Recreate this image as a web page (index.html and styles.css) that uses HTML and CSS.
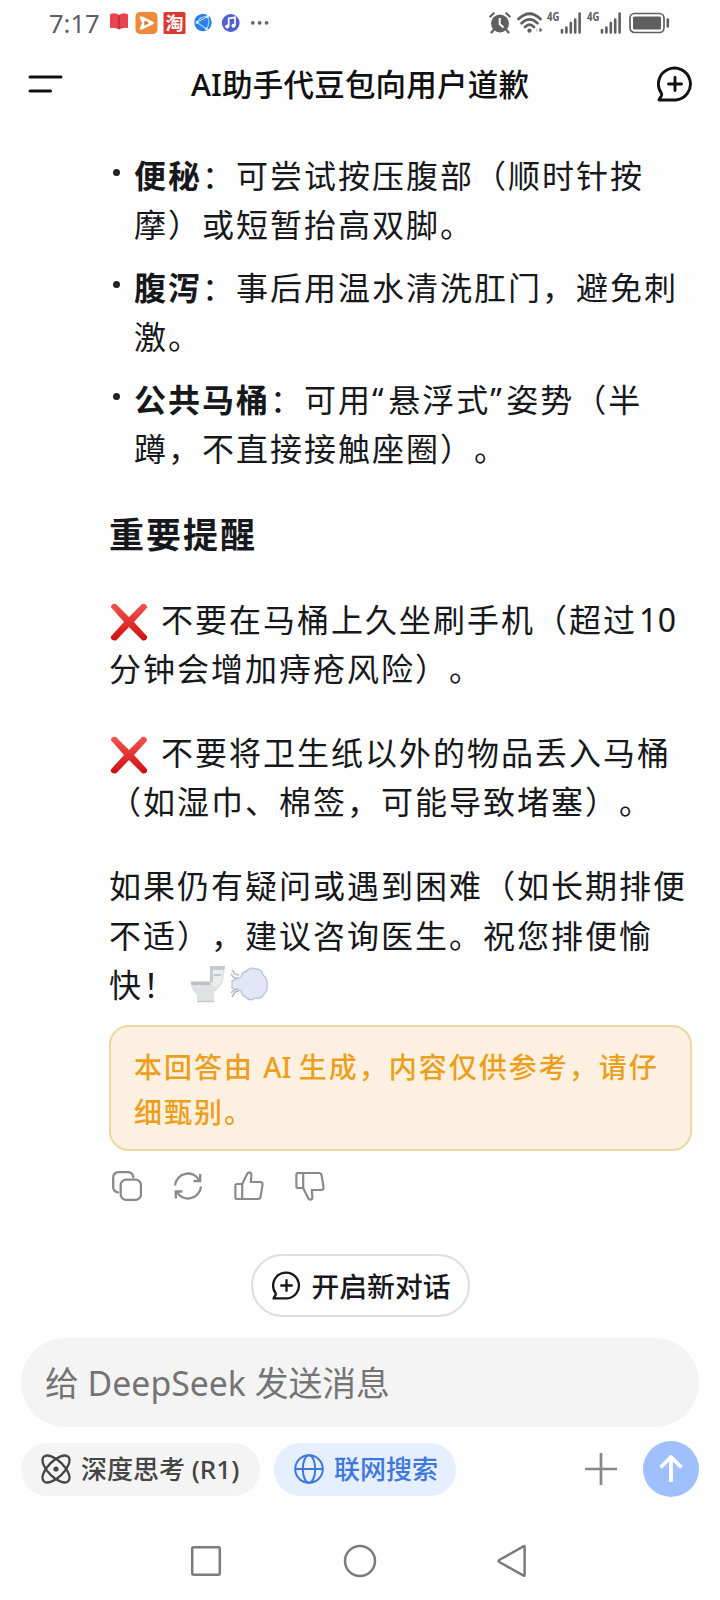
FILE: index.html
```html
<!DOCTYPE html>
<html lang="zh-CN">
<head>
<meta charset="utf-8">
<title>AI助手代豆包向用户道歉</title>
<link rel="stylesheet" href="styles.css">
</head>
<body>
<svg width="0" height="0" class="defs" aria-hidden="true">
  <defs>
    <linearGradient id="red" x1="0" y1="0" x2="0" y2="1"><stop offset="0" stop-color="#f2564f"/><stop offset="1" stop-color="#cf0d10"/></linearGradient>
    <symbol id="newchat" viewBox="0 0 36 36"><path d="M2 34 L4.4 29.6 Q5 28.400 4.300 27.200 A16 16 0 1 1 18.500 34 Z M18 11.500V24.500M11.500 18H24.500" fill="none" stroke="currentColor" stroke-width="2.900" stroke-linecap="round" stroke-linejoin="round"/></symbol>
    <symbol id="cross" viewBox="0 0 38 38"><path d="M0.800 4Q2 0 6 1L19 14L32 1Q36.500 0 37.200 4.500L24 19L37.200 33.500Q37.500 38 32.500 37.500L19 24L6 37.500Q0.500 38 0.800 33.500L14 19Z" fill="url(#red)"/></symbol>
    <symbol id="signal" viewBox="0 0 34 22"><path d="M14 20.500v-2.500M18.400 20.500v-5M22.800 20.500v-9.500M27.200 20.500v-13M31.600 20.500V1.500" stroke="currentColor" stroke-width="2.600" stroke-linecap="round"/></symbol>
    <symbol id="thumb" viewBox="0 0 30 30"><path d="M2.800 13H8.200V28H2.800Q1.400 28 1.400 26.600V14.400Q1.400 13 2.800 13ZM8.200 13L13.200 2.800Q14 1.200 15.600 1.300Q17.500 1.700 17.400 4.200L16.800 11H26.200Q28.800 11.100 28.500 13.800L26.600 25.600Q26.200 28 23.800 28H8.200" fill="none" stroke="currentColor" stroke-width="2.200" stroke-linejoin="round"/></symbol>
  </defs>
</svg>
<div class="screen">
  <div class="status">
    <span class="time">7:17</span>
    <svg class="apps" width="162" height="24" viewBox="0 0 162 24">
      <path d="M1 3.500Q6 1 10 4Q14 1 19 3.500V17Q14 16 10 18.500Q6 16 1 17Z" fill="#e9444d"/><path d="M10 4.500V18" stroke="#b82431" stroke-width="1.200"/>
      <rect x="26.500" y="1" width="22" height="22" rx="4.500" fill="#ef8a3c"/><path d="M32 6.500L43.500 12L32 17.500L34.500 12Z" fill="none" stroke="#fff" stroke-width="2.600" stroke-linejoin="round"/><circle cx="37" cy="12" r="1.700" fill="#d9733a"/>
      <rect x="54.500" y="1" width="22" height="22" rx="1.500" fill="#d93a30"/><text x="65.500" y="18.500" text-anchor="middle" class="tao">淘</text>
      <circle cx="94" cy="11.500" r="8.700" fill="#2a80e6"/><path d="M98.500 5.500L88 11.500L97.500 18M98.500 5.500Q101.500 12 97.500 18M88 11.500Q91 5 98.500 5.500" fill="none" stroke="#a4d6ff" stroke-width="1.100"/><circle cx="98.500" cy="5.500" r="1.500" fill="#d8efff"/><circle cx="88" cy="11.500" r="1.400" fill="#d8efff"/><circle cx="97.500" cy="18" r="1.400" fill="#d8efff"/>
      <circle cx="121.700" cy="12" r="8.900" fill="#5060cf"/><path d="M119.700 15.500V7.500L126 6.300V14.500" fill="none" stroke="#fff" stroke-width="1.700"/><circle cx="118.200" cy="15.500" r="2" fill="#fff"/><circle cx="124.500" cy="14.700" r="2" fill="#fff"/>
      <g fill="#666"><circle cx="143.800" cy="11.800" r="1.900"/><circle cx="150.600" cy="11.800" r="1.900"/><circle cx="157.600" cy="11.800" r="1.900"/></g>
    </svg>
    <svg class="alarm" width="22" height="22" viewBox="0 0 22 22"><circle cx="11" cy="11.500" r="9" fill="currentColor"/><path d="M1.200 4.500L4.800 1.300M20.800 4.500L17.200 1.300M4.500 18L2.500 20.500M17.500 18L19.500 20.500" stroke="currentColor" stroke-width="2.200" stroke-linecap="round"/><path d="M10.700 6V12L14.500 15.500" fill="none" stroke="#fff" stroke-width="2"/></svg>
    <svg class="wifi" width="26" height="22" viewBox="0 0 26 22"><g fill="none" stroke="currentColor" stroke-width="2.700" stroke-linecap="round"><path d="M1.500 7Q12.500-3.500 23.500 7"/><path d="M4.500 11.200Q12.500 3.500 20.500 11.200"/><path d="M8 15Q12.500 10.500 17 15"/></g><circle cx="12.500" cy="18.700" r="2.100" fill="currentColor"/><path d="M20.500 16L18.500 18L20.500 20Z" fill="#bbb"/><path d="M22.500 15.500L25.500 18L22.500 20.500Z" fill="currentColor"/></svg>
    <span class="net"><b>4G</b><svg width="34" height="22"><use href="#signal"/></svg></span>
    <span class="net"><b>4G</b><svg width="34" height="22"><use href="#signal"/></svg></span>
    <svg class="battery" width="42" height="22" viewBox="0 0 42 22"><rect x="1" y="1.500" width="34" height="19" rx="4.500" fill="none" stroke="currentColor" stroke-width="1.700"/><rect x="4" y="4.500" width="28" height="13" rx="1.500" fill="currentColor"/><path d="M38.800 7.500V14.500" stroke="currentColor" stroke-width="2.600" stroke-linecap="round"/></svg>
  </div>
  <header class="header">
    <svg width="36" height="20" viewBox="0 0 36 20"><path d="M3 3H34M3 17H23.500" stroke="#111" stroke-width="3" stroke-linecap="round"/></svg>
    <h1 class="title">AI助手代豆包向用户道歉</h1>
    <svg width="36" height="36"><use href="#newchat"/></svg>
  </header>
  <main class="answer">
    <ul class="tips">
      <li><div><strong>便秘</strong>：可尝试按压腹部（顺时针按<br>摩）或短暂抬高双脚。</div></li>
      <li><div><strong>腹泻</strong>：事后用温水清洗肛门，避免刺<br>激。</div></li>
      <li><div><strong>公共马桶</strong>：可用<span class="quote">“</span>悬浮式<span class="quote">”</span>姿势（半<br>蹲，不直接接触座圈）。</div></li>
    </ul>
    <h2 class="subhead">重要提醒</h2>
    <p><svg class="emoji mark" width="38" height="38"><use href="#cross"/></svg>不要在马桶上久坐刷手机（超过<span class="num">10</span><br>分钟会增加痔疮风险）。</p>
    <p><svg class="emoji mark" width="38" height="38"><use href="#cross"/></svg>不要将卫生纸以外的物品丢入马桶<br>（如湿巾、棉签，可能导致堵塞）。</p>
    <p>如果仍有疑问或遇到困难（如长期排便<br>不适），建议咨询医生。祝您排便愉<br>快！<svg class="emoji pair" width="80" height="38" viewBox="0 0 80 38">
      <path d="M20 1H35L33 17Q29 24 24 27V37H7V30Q1 25 1 18H20Z" fill="#dfe2e3"/><path d="M20 1H35L34 5H23V17H20Z" fill="#c5cbcb"/><path d="M0.500 16.500H20V20H1.500Z" fill="#b7c4bf"/><path d="M23 5H33L31 17Q27 22 23 22Z" fill="#eceded"/><path d="M24 10H31" stroke="#b5b9ba" stroke-width="1.500"/><path d="M7 36.500H24" stroke="#c9cbcb" stroke-width="1.500"/>
      <path d="M51 12Q52 7 56 6.500Q60 1.500 66 4Q72 4 73 10Q78 14 77 19Q78 26 74 29Q71 35 65 33Q60 37 56 32Q52 31 51 26L42 23V16Z" fill="#e3e6f7" stroke="#bcc2da" stroke-width="1.300"/><path d="M42 5L45 9L49 10M41 9L44 13L48 13M42 32L45 27L49 26M41 28L44 25L48 24" fill="none" stroke="#b4bacb" stroke-width="1.500"/></svg></p>
    <div class="notice">本回答由 <span class="latin">AI </span>生成，内容仅供参考，请仔<br>细甄别。</div>
    <div class="actions">
      <svg width="30" height="30" viewBox="0 0 30 30"><g fill="none" stroke="currentColor" stroke-width="2.300"><rect x="8.700" y="8.600" width="20.300" height="20.300" rx="5.500"/><path d="M6 21.300Q1.200 20.500 1.200 16V7Q1.200 1.200 7 1.200H15.500Q20.500 1.200 21.300 6" stroke-linecap="round"/></g></svg>
      <svg width="30" height="30" viewBox="0 0 30 30"><path d="M2 14.500A13 13 0 0 1 26.500 9.500M28 15.500A13 13 0 0 1 3.500 20.500M27.200 3V10H20.500M2.800 27.500V20.500H9.500" fill="none" stroke="currentColor" stroke-width="2.300"/></svg>
      <svg width="30" height="30"><use href="#thumb"/></svg>
      <svg class="down" width="30" height="30"><use href="#thumb"/></svg>
    </div>
  </main>
  <button class="fresh"><svg width="29" height="29"><use href="#newchat"/></svg>开启新对话</button>
  <div class="composer">给 DeepSeek 发送消息</div>
  <div class="tools">
    <span class="chip"><svg width="30" height="30" viewBox="0 0 30 30"><g fill="none" stroke="currentColor" stroke-width="2.300"><ellipse cx="15" cy="15" rx="17.300" ry="8" transform="rotate(45 15 15)"/><ellipse cx="15" cy="15" rx="17.300" ry="8" transform="rotate(-45 15 15)"/></g><circle cx="15" cy="15" r="2.600" fill="currentColor"/></svg>深度思考 (R1)</span>
    <span class="chip on"><svg width="30" height="30" viewBox="0 0 30 30"><g fill="none" stroke="currentColor" stroke-width="2"><circle cx="15" cy="15" r="13.800"/><ellipse cx="15" cy="15" rx="6.200" ry="13.800"/><path d="M1 15H29"/></g></svg>联网搜索</span>
    <svg class="plus" width="32" height="32" viewBox="0 0 32 32"><path d="M16 0V32M0 16H32" stroke="#888" stroke-width="2.700"/></svg>
    <span class="send"><svg width="24" height="28" viewBox="0 0 24 28"><path d="M12 27V3M1.500 12.500L12 2L22.500 12.500" fill="none" stroke="#fff" stroke-width="3.800"/></svg></span>
  </div>
  <nav class="nav">
    <svg width="34" height="34" viewBox="0 0 34 34"><rect x="3.200" y="3.200" width="27.600" height="27.600" rx="1.500"/></svg>
    <svg width="34" height="34" viewBox="0 0 34 34"><circle cx="17" cy="17" r="15"/></svg>
    <svg width="34" height="34" viewBox="0 0 34 34"><path d="M26.800 2.200Q27.600 1.800 27.600 3V31Q27.600 32.200 26.600 31.700L2.300 18Q0.800 17 2.300 16Z"/></svg>
  </nav>
</div>
</body>
</html>
```
FILE: styles.css
```css
* { box-sizing: border-box; }
body {
  margin: 0;
  background: #fefefe;
  color: #17181c;
  font-family: "Noto Sans", "Noto Sans CJK SC", sans-serif;
  text-spacing-trim: space-all;
}
.defs { position: absolute; }
svg { display: block; flex: none; }
.screen {
  width: 720px;
  height: 1600px;
  display: flex;
  flex-direction: column;
  overflow: hidden;
}
.status {
  height: 46px;
  padding-left: 49px;
  display: flex;
  align-items: center;
  color: #5f5f5f;
}
.time { width: 60px; font-size: 25.5px; line-height: 46px; }
.tao { font-size: 18px; font-weight: 700; fill: #fff; }
.alarm { margin-left: 218px; }
.wifi { margin-left: 6px; }
.net { position: relative; margin-left: 4px; width: 37px; display: flex; }
.net b {
  position: absolute;
  left: 0;
  top: -2px;
  font: 700 12px/14px "Noto Sans", sans-serif;
  transform: scaleX(0.8);
  transform-origin: left;
}
.net svg { margin-left: 1px; }
.net + .net { margin-left: 3px; }
.battery { margin-left: 5px; }
.header {
  height: 76px;
  padding: 0 27px;
  display: flex;
  align-items: center;
  justify-content: space-between;
  color: #111;
}
.title {
  margin: 0;
  font-size: 30.5px;
  font-weight: 500;
  letter-spacing: 0.2px;
  line-height: 44px;
}
.answer {
  padding: 29px 28px 0 109px;
  font-size: 32px;
  line-height: 49.2px;
  letter-spacing: 2px;
  white-space: nowrap;
}
.tips {
  list-style: none;
  margin: 0;
  padding: 0;
  display: flex;
  flex-direction: column;
  gap: 13.7px;
}
.tips li { display: flex; gap: 14px; padding-left: 4px; }
.tips li::before {
  content: "";
  width: 7px;
  height: 7px;
  margin-top: 18px;
  border-radius: 50%;
  background: #222;
}
.quote { letter-spacing: 4.6px; }
.num { margin-left: 2px; letter-spacing: 0.5px; }
.subhead {
  margin: 36px 0 36px;
  font-size: 35px;
  line-height: 49px;
  letter-spacing: 2px;
}
.answer p { margin: 0 0 35px; }
.answer p:last-of-type { margin-bottom: 16px; }
.emoji { display: inline-block; vertical-align: middle; margin-top: -8px; margin-bottom: -6px; }
.mark { margin-left: 1px; margin-right: 13px; }
.pair { margin-left: 13px; margin-top: -10px; margin-bottom: -2px; }
.notice {
  width: 583px;
  height: 126px;
  padding: 18px 23px;
  border: 2px solid #eed7a2;
  border-radius: 20px;
  background: #fcf1e0;
  color: #ec9f1c;
  font-size: 28px;
  font-weight: 500;
  line-height: 45px;
}
.latin { letter-spacing: 0; }
.actions { display: flex; gap: 31px; padding: 20px 0 0 3px; color: #8a8a8a; }
.down { transform: scaleY(-1); }
.fresh {
  align-self: center;
  width: 219px;
  height: 63px;
  margin: 53px 0 0;
  padding: 0 0 0 19px;
  display: flex;
  align-items: center;
  gap: 11px;
  border: 2px solid #dedede;
  border-radius: 32px;
  background: #fefefe;
  color: #17181c;
  font-family: inherit;
  font-size: 27.8px;
  font-weight: 500;
  line-height: 38px;
  white-space: nowrap;
}
.composer {
  margin: 21px 21px 0;
  height: 89px;
  padding-left: 24px;
  border-radius: 45px;
  background: #f4f4f4;
  color: #747474;
  font-size: 33.8px;
  line-height: 91px;
}
.tools { display: flex; align-items: center; margin: 14px 21px 0; height: 56px; }
.chip {
  width: 239px;
  height: 53px;
  padding-left: 20px;
  display: flex;
  align-items: center;
  gap: 10px;
  border-radius: 27px;
  background: #f4f4f4;
  color: #454545;
  font-size: 26px;
  font-weight: 500;
  line-height: 55px;
  white-space: nowrap;
}
.chip.on { width: 182px; margin-left: 14px; background: #e5effd; color: #3f78dc; }
.plus { margin-left: auto; }
.send {
  width: 56px;
  height: 56px;
  margin-left: 26px;
  display: flex;
  align-items: center;
  justify-content: center;
  border-radius: 50%;
  background: #a0c0fd;
}
.nav {
  display: flex;
  justify-content: center;
  gap: 120px;
  margin-top: 47px;
}
.nav svg { fill: none; stroke: #7b7b7b; stroke-width: 2.5; }
```
